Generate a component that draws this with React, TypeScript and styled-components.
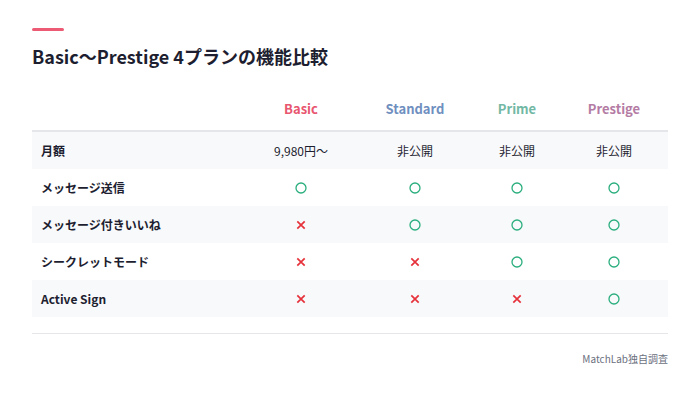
import React from "react";
import styled, { createGlobalStyle } from "styled-components";

const GlobalStyle = createGlobalStyle`
  html, body { margin: 0; padding: 0; background: #ffffff; }
  body { font-family: "Noto Sans CJK JP", "Noto Sans", sans-serif; color: #1d1e30; }
  * { box-sizing: border-box; }
`;

const Page = styled.div`
  width: 700px;
  height: 396px;
  padding: 28px 32px 0 32px;
  display: flex;
  flex-direction: column;
`;

const AccentBar = styled.div`
  width: 32px;
  height: 3px;
  border-radius: 2px;
  background: #ec5b73;
  margin-bottom: 12px;
`;

const Title = styled.h2`
  margin: 0;
  font-size: 18px;
  line-height: 27px;
  font-weight: 700;
  color: #1d1e30;
`;

const Table = styled.div`
  margin-top: 20px;
  display: grid;
  grid-template-columns: 214px 110px 118px 86px 108px;
`;

const HeaderCell = styled.div<{ $color?: string }>`
  height: 42px;
  border-bottom: 2px solid #e4e6ea;
  display: flex;
  align-items: center;
  justify-content: center;
  padding-bottom: 3px;
  font-size: 13px;
  font-weight: 700;
  color: ${(p) => p.$color ?? "#1d1e30"};
`;

const Row = styled.div<{ $shaded: boolean }>`
  display: contents;
  & > div {
    background: ${(p) => (p.$shaded ? "#f8f9fb" : "#ffffff")};
  }
`;

const LabelCell = styled.div`
  height: 37px;
  display: flex;
  align-items: center;
  padding-left: 9px;
  font-size: 12px;
  font-weight: 700;
  color: #1d1e30;
`;

const ValueCell = styled.div`
  height: 37px;
  display: flex;
  align-items: center;
  justify-content: center;
  font-size: 12px;
  font-weight: 400;
  color: #1d1e30;
`;

const MarkSvg = styled.svg`
  display: block;
  width: 12px;
  height: 12px;
  margin-top: 1px;
`;

const Divider = styled.div`
  margin-top: 16px;
  height: 1px;
  background: #e4e6ea;
`;

const Source = styled.div`
  margin-top: 17px;
  text-align: right;
  font-size: 10px;
  line-height: 16px;
  color: #6b7080;
`;

const plans = [
  { name: "Basic", color: "#e8566f" },
  { name: "Standard", color: "#6f8fbf" },
  { name: "Prime", color: "#72b8a4" },
  { name: "Prestige", color: "#b47ca4" },
];

type Cell = string | boolean;

const rows: { label: string; values: Cell[] }[] = [
  { label: "月額", values: ["9,980円〜", "非公開", "非公開", "非公開"] },
  { label: "メッセージ送信", values: [true, true, true, true] },
  { label: "メッセージ付きいいね", values: [false, true, true, true] },
  { label: "シークレットモード", values: [false, false, true, true] },
  { label: "Active Sign", values: [false, false, false, true] },
];

function Mark({ ok }: { ok: boolean }) {
  return ok ? (
    <MarkSvg viewBox="0 0 12 12" role="img" aria-label="○">
      <circle cx="6" cy="6" r="5" fill="none" stroke="#2aae7e" strokeWidth="1.3" />
    </MarkSvg>
  ) : (
    <MarkSvg viewBox="0 0 12 12" role="img" aria-label="×">
      <path d="M2.3 2.3 L9.7 9.7 M9.7 2.3 L2.3 9.7" stroke="#e6323b" strokeWidth="1.7" strokeLinecap="butt" />
    </MarkSvg>
  );
}

export default function App() {
  return (
    <>
      <GlobalStyle />
      <Page>
        <AccentBar />
        <Title>Basic〜Prestige 4プランの機能比較</Title>
        <Table>
          <HeaderCell />
          {plans.map((p) => (
            <HeaderCell key={p.name} $color={p.color}>
              {p.name}
            </HeaderCell>
          ))}
          {rows.map((r, i) => (
            <Row key={r.label} $shaded={i % 2 === 0}>
              <LabelCell>{r.label}</LabelCell>
              {r.values.map((v, j) => (
                <ValueCell key={j}>{typeof v === "string" ? v : <Mark ok={v} />}</ValueCell>
              ))}
            </Row>
          ))}
        </Table>
        <Divider />
        <Source>MatchLab独自調査</Source>
      </Page>
    </>
  );
}
